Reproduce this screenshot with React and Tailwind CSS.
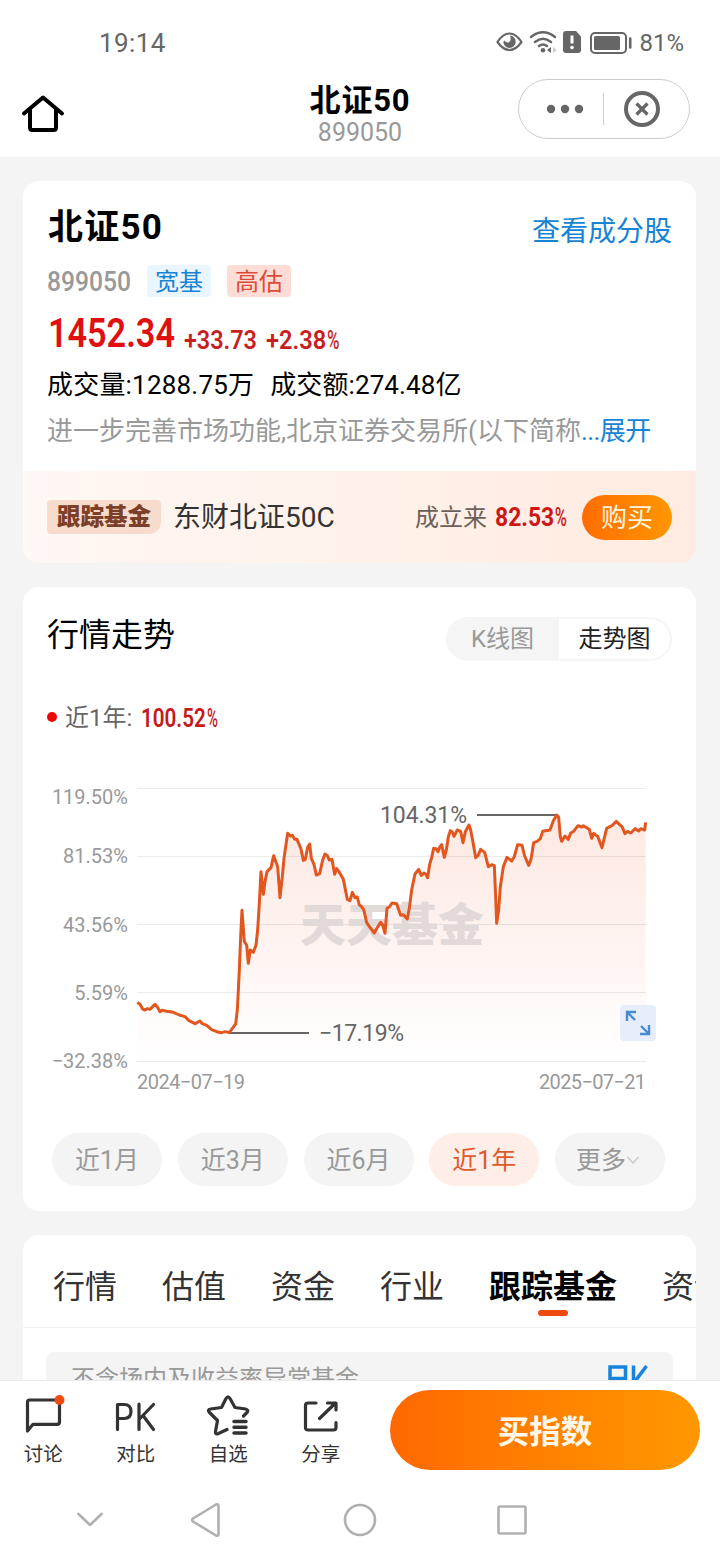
import React from "react";

const LINE =
  "292,697 300,703 308,717 315,720 322,716 330,718 338,710 345,703 352,711 360,725 366,721 380,724 400,727 418,735 435,740 447,752 465,761 480,753 487,761 500,766 515,779 530,785 545,788 556,785 568,788 575,778 587,762 592,720 598,600 602,500 606,421 613,515 620,525 625,580 631,540 640,547 648,525 653,480 658,400 663,305 670,373 675,335 681,305 693,293 701,257 713,290 720,383 727,320 732,265 743,190 751,198 757,196 764,208 771,208 783,237 790,271 796,268 803,232 809,222 814,265 822,283 829,315 839,311 848,270 855,252 862,257 868,270 876,268 884,313 890,296 897,305 910,328 922,388 930,392 937,367 945,383 952,381 958,405 963,408 971,418 980,458 990,472 1003,489 1011,474 1022,457 1028,465 1035,490 1041,415 1048,411 1056,399 1070,401 1082,436 1090,434 1102,447 1108,415 1115,360 1125,312 1136,298 1144,316 1152,309 1157,312 1163,323 1169,283 1175,263 1181,235 1188,236 1194,245 1200,230 1205,224 1213,262 1219,240 1225,200 1231,182 1237,186 1242,199 1252,180 1262,184 1269,218 1276,185 1287,165 1292,180 1300,222 1307,263 1314,257 1322,238 1334,247 1345,290 1355,284 1363,287 1367,380 1370,460 1376,420 1381,350 1390,290 1401,262 1415,273 1423,260 1433,224 1446,226 1454,258 1466,286 1473,268 1481,218 1490,215 1501,206 1508,184 1530,180 1540,152 1550,135 1556,142 1561,200 1565,214 1575,198 1585,208 1592,189 1600,185 1614,167 1625,171 1630,167 1648,178 1655,205 1661,190 1673,199 1686,233 1694,200 1700,175 1710,170 1718,165 1729,154 1738,163 1746,170 1755,191 1763,184 1772,189 1786,176 1796,183 1802,176 1814,180 1817,157";

function StatusBar() {
  return (
    <div className="flex h-[72px] items-center pt-[14px] text-[#666]">
      <span className="ml-[99px] text-[26px] leading-none tracking-[0.4px]">19:14</span>
      <svg className="ml-auto" width="136" height="30" viewBox="0 0 136 30" fill="none" stroke="#666">
        <path d="M1.5 14C5 8.5 9 5.500 13.500 5.500S22 8.500 25.500 14C22 19 18 22 13.500 22S5 19 1.500 14Z" strokeWidth="2.200" />
        <path d="M14 7.500A6.200 6.200 0 1 1 7.300 14Q8 13 8.500 12.500Q10 15 12.500 14.500Q16 12.500 14 7.500Z" fill="#666" stroke="none" />
        <g strokeWidth="2.400" strokeLinecap="round">
          <path d="M35 9Q47 -0.500 59 9M39 14Q47 7.500 55 14M43 18Q47 15 51 18" />
        </g>
        <circle cx="47" cy="22.300" r="2.300" fill="#666" stroke="none" />
        <path d="M51 22L55 19V25Z" fill="#666" stroke="none" />
        <path d="M57 19V25L61 22Z" fill="#ccc" stroke="none" />
        <path d="M70 3H80L85 8.500V22Q85 25 82 25H70Q67 25 67 22V6Q67 3 70 3Z" fill="#666" stroke="none" />
        <path d="M76 7.500V15.500" stroke="#fff" strokeWidth="3" />
        <circle cx="76" cy="19.500" r="1.800" fill="#fff" stroke="none" />
        <rect x="95" y="5" width="35" height="20" rx="4" strokeWidth="2" />
        <rect x="98" y="8" width="26" height="14" rx="1.500" fill="#666" stroke="none" />
        <path d="M134.200 10.500V19.500" strokeWidth="2.600" strokeLinecap="round" />
      </svg>
      <span className="ml-[7px] mr-[36px] text-[24px] leading-none">81%</span>
    </div>
  );
}

function Header() {
  return (
    <header className="grid h-[85px] grid-cols-3 items-start">
      <svg className="ml-[21px] mt-[21px]" width="44" height="40" viewBox="0 0 44 40" fill="none" stroke="#000" strokeWidth="4" strokeLinecap="round" strokeLinejoin="round">
        <path d="M3 20.500L22 4.500L41 20.500" />
        <path d="M9 17V34.500Q9 37 11.500 37H32.500Q35 37 35 34.500V17" />
      </svg>
      <div className="flex flex-col items-center">
        <h1 className="mt-[13px] text-[31px] font-bold leading-[32px] tracking-[0.8px]">北证50</h1>
        <p className="mt-[3px] text-[25px] leading-[26px] text-[#999]">899050</p>
      </div>
      <div className="mr-[30px] mt-[7px] flex h-[60px] w-[172px] items-center justify-self-end rounded-full border border-[#ccc]">
        <svg className="ml-[27px]" width="38" height="10" fill="#666">
          <circle cx="5" cy="5" r="4.200" /><circle cx="19" cy="5" r="4.200" /><circle cx="33" cy="5" r="4.200" />
        </svg>
        <span className="ml-[19px] h-8 w-px bg-[#ccc]" />
        <svg className="ml-[19px]" width="38" height="38" fill="none" stroke="#666">
          <circle cx="19" cy="19" r="16" strokeWidth="4" />
          <path d="M13.500 13.500L24.500 24.500M24.500 13.500L13.500 24.500" strokeWidth="3.200" />
        </svg>
      </div>
    </header>
  );
}

function Percent() {
  return <span className="ml-[1px] inline-block w-[13px] origin-left scale-x-[0.72] font-medium">%</span>;
}

function Summary() {
  return (
    <section className="h-[382px] shrink-0 overflow-hidden rounded-[16px] bg-white">
      <div className="h-[290px] pl-[25px] pr-[24px] pt-[24px]">
        <div className="flex h-[46px] items-center justify-between">
          <h2 className="mt-[-2px] text-[35px] font-bold leading-none tracking-[1.200px]">北证50</h2>
          <a className="mt-[7px] text-[28px] leading-none text-[#1783d3]">查看成分股</a>
        </div>
        <div className="mt-[14px] flex h-8 items-center">
          <span className="ml-[-1px] w-[100px] pt-[1px] text-[28px] font-medium leading-none text-[#999]"><span className="inline-block origin-left scale-x-[0.88]">899050</span></span>
          <span className="flex h-8 w-16 items-center justify-center rounded bg-[#eaf6ff] pt-[2px] text-[24px] leading-none text-[#1783d3]">宽基</span>
          <span className="ml-4 flex h-8 w-16 items-center justify-center rounded bg-[#ffdcd6] pt-[2px] text-[24px] leading-none text-[#da4c38]">高估</span>
        </div>
        <div className="mt-[12px] flex h-[48px] items-start font-semibold leading-[48px]">
          <span className="w-[136px] pt-[1px] text-[40px] text-[#e01010]"><span className="inline-block origin-left scale-x-[0.855]">1452.34</span></span>
          <span className="w-[82px] pt-[7px] text-[26px] text-[#c81e1e]"><span className="inline-block origin-left scale-x-[0.9]">+33.73</span></span>
          <span className="whitespace-nowrap pt-[7px] text-[26px] text-[#c81e1e]"><span className="inline-block origin-left scale-x-[0.91]">+2.38<Percent /></span></span>
        </div>
        <div className="ml-[-1px] mt-[9px] flex h-[36px] items-center gap-[16px] whitespace-nowrap pt-[1px] text-[26px] leading-none">
          <span className="tracking-[0.200px]">成交量:1288.75万</span>
          <span className="tracking-[0.100px]">成交额:274.48亿</span>
        </div>
        <p className="ml-[-1px] mt-[10px] flex h-[36px] items-center whitespace-nowrap pt-[2px] text-[26px] leading-none text-[#999]">
          进一步完善市场功能,北京证券交易所(以下简称<span className="tracking-[-0.600px] text-[#1783d3]">...展开</span>
        </p>
      </div>
      <div className="flex h-[92px] items-center bg-gradient-to-r from-[#fff8f4] via-[#fff1ea] to-[#ffebe1] pl-[24px] pr-[24px]">
        <span className="flex h-[34px] w-[114px] items-center justify-center rounded-[4px] rounded-br-[12px] bg-[#f7dccd] pt-[2px] text-[23.500px] font-black leading-none text-[#7c3f28]">跟踪基金</span>
        <span className="ml-[12px] pt-[2px] text-[28px] leading-none text-[#333]">东财北证50C</span>
        <span className="ml-auto pt-[2px] text-[24px] leading-none text-[#6b6059]">成立来</span>
        <span className="ml-[8px] w-[71px] whitespace-nowrap text-[26px] font-bold leading-none text-[#cd1717]"><span className="inline-block origin-left scale-x-[0.88]">82.53<Percent /></span></span>
        <button className="ml-[16px] h-[45px] w-[90px] rounded-full bg-gradient-to-r from-[#ff6c00] to-[#ff9600] pt-[2px] text-[26px] leading-none text-[#fff5df]">购买</button>
      </div>
    </section>
  );
}

function Chart() {
  const rows = [
    [18.5, "119.50%", 34],
    [86.5, "81.53%", 93],
    [154.5, "43.56%", 162],
    [222.5, "5.59%", 230],
    [291.5, "−32.38%", 298],
  ];
  return (
    <svg className="ml-[17px] block" width="640" height="330" viewBox="0 0 640 330">
      <defs>
        <linearGradient id="fade" x1="0" y1="45" x2="0" y2="290" gradientUnits="userSpaceOnUse">
          <stop offset="0" stopColor="#f0501e" stopOpacity="0.13" />
          <stop offset="0.500" stopColor="#f0501e" stopOpacity="0.070" />
          <stop offset="1" stopColor="#f0501e" stopOpacity="0" />
        </linearGradient>
        <clipPath id="area"><polygon points={`${LINE} 1817,873 292,873`} transform="scale(.33333)" /></clipPath>
      </defs>
      <rect x="97" y="40" width="510" height="251" fill="url(#fade)" clipPath="url(#area)" />
      {rows.map(([y, label, ty]) => (
        <g key={label}>
          <path d={`M97 ${y}H606`} stroke="#000" strokeOpacity="0.080" />
          <text x="88" y={ty} textAnchor="end" fontSize="20" fill="#999">{label}</text>
        </g>
      ))}
      <text x="260" y="171" fontSize="46" fontWeight="900" fill="#e2dad8">天天基金</text>
      <path d="M190 263H269M437 45H516" stroke="#666" strokeWidth="2" />
      <polyline points={LINE} transform="scale(.33333)" fill="none" stroke="#e2561f" strokeWidth="9" strokeLinejoin="round" />
      <g fontSize="23" fill="#666">
        <text x="340" y="53" textLength="87">104.31%</text>
        <text x="279" y="271" textLength="85">−17.19%</text>
      </g>
      <g fontSize="20" fill="#999">
        <text x="97" y="319" textLength="108">2024−07−19</text>
        <text x="499" y="319" textLength="107">2025−07−21</text>
      </g>
      <rect x="580" y="235" width="36" height="36" rx="4" fill="#e6eefb" />
      <path d="M587 251V242H596M588 243L595 250M609 255V264H600M608 263L601 256" fill="none" stroke="#4a8ad4" strokeWidth="2.400" />
    </svg>
  );
}

function Trend() {
  const base = "flex h-[53px] w-[110px] items-center justify-center rounded-full pt-[2px] text-[25px] leading-none ";
  return (
    <section className="mt-6 h-[624px] shrink-0 rounded-[16px] bg-white pt-[23px]">
      <div className="flex h-[57px] items-center justify-between pl-[24px] pr-[24px]">
        <h3 className="mt-[-8px] text-[32px] leading-none">行情走势</h3>
        <div className="flex h-[44px] w-[226px] overflow-hidden rounded-full border-2 border-[#f5f5f5] text-[24px] leading-none">
          <span className="flex w-[111px] items-center justify-center bg-[#f5f5f5] pr-[2px] text-[#999]">K线图</span>
          <span className="flex flex-1 items-center justify-center text-[#222]">走势图</span>
        </div>
      </div>
      <div className="mt-[30px] flex h-[40px] items-center pl-[24px]">
        <span className="h-[10px] w-[10px] rounded-full bg-[#f00606]" />
        <span className="ml-[8px] w-[76px] pt-[2px] text-[24px] leading-none text-[#666]">近1年:</span>
        <span className="whitespace-nowrap pt-[2px] text-[25px] font-semibold leading-none text-[#c41a1a]"><span className="inline-block origin-left scale-x-[0.825]">100.52<Percent /></span></span>
      </div>
      <div className="mt-[33px]"><Chart /></div>
      <div className="mt-[33px] flex justify-between pl-[29px] pr-[31px] text-[#999]">
        <span className={base + "bg-[#f4f4f4]"}>近1月</span>
        <span className={base + "bg-[#f4f4f4]"}>近3月</span>
        <span className={base + "bg-[#f4f4f4]"}>近6月</span>
        <span className={base + "bg-[#ffeee8] text-[#dd5b2a]"}>近1年</span>
        <span className={base + "bg-[#f4f4f4] pr-[4px]"}>
          更多
          <svg width="14" height="10" viewBox="0 0 14 10" fill="none" stroke="#ccc" strokeWidth="1.600"><path d="M1.500 1L7 7L12.500 1" /></svg>
        </span>
      </div>
    </section>
  );
}

function Tabs() {
  return (
    <section className="mt-6 h-[240px] shrink-0 overflow-hidden rounded-[16px] bg-white">
      <nav className="flex h-[93px] gap-[45px] whitespace-nowrap border-b border-[#f1f1f1] pl-[30px] pt-[35px] text-[32px] leading-[34px] text-[#333]">
        <span>行情</span><span>估值</span><span>资金</span><span>行业</span>
        <span className="flex flex-col items-center font-bold text-black">
          跟踪基金
          <i className="mt-[6px] h-[6px] w-[30px] rounded-full bg-[#ee4a10]" />
        </span>
        <span>资讯</span>
      </nav>
      <div className="ml-[23px] mr-[23px] mt-[24px] flex h-[56px] items-center justify-between rounded-t-[8px] bg-[#f4f4f4] pl-[25px] pr-[25px]">
        <span className="mt-[-2px] text-[24px] leading-none text-[#999]">不含场内及收益率异常基金</span>
        <svg className="mt-[-3px]" width="41" height="30" viewBox="0 0 41 30" fill="none" stroke="#1783dd" strokeWidth="3.500">
          <path d="M3 30V3H18.500V14.500H3M26.500 1.500V30M39.500 2L27.500 18L39.500 30" />
        </svg>
      </div>
    </section>
  );
}

function Item({ label, children }) {
  return (
    <div className="flex w-[92.5px] flex-col items-center">
      <svg width="48" height="46" viewBox="0 0 48 46" fill="none" stroke="#333" strokeWidth="3.200" strokeLinecap="round" strokeLinejoin="round">{children}</svg>
      <span className="mt-[8px] text-[19.5px] leading-[22px] text-[#333]">{label}</span>
    </div>
  );
}

function BottomBar() {
  return (
    <footer className="h-[180px] shrink-0 border-t border-[#ececec] bg-white">
      <div className="flex h-[99px] pt-[9px]">
        <div className="ml-[-3px] flex">
          <Item label="讨论">
            <path d="M8.500 41V12Q8.500 10 10.500 10H38Q40.500 10 40.500 12.500V32Q40.500 34.300 38 34.300H14Z" />
            <circle cx="40.500" cy="10" r="5" fill="#ee4a10" stroke="none" />
          </Item>
          <Item label="对比">
            <path d="M5.500 39.500V14.500H12Q19 14.500 19 21.500T12 28.500H5.500M27 14V39.500M41.500 14.500L27.500 29M31 25.500L41.500 39.500" />
          </Item>
          <Item label="自选">
            <path d="M23 39.500L14.500 43.500Q11 45 11.500 41.500L13.500 30.500L5.500 22.500Q3 19.500 6.500 19L17.500 17.500L22 8.500Q24 5 26 8.500L31 17.500L41.500 19Q45 20 43 22.500L39.500 26" />
            <path d="M30 31.500H42M30 37.200H42M30 43H42" strokeWidth="3.500" />
          </Item>
          <Item label="分享">
            <path d="M19 13H11Q8.500 13 8.500 15.500V37.500Q8.500 40 11 40H36.500Q39 40 39 37.500V32.500M22.500 28.500L38.500 13M30.500 13H39V20" />
          </Item>
        </div>
        <button className="ml-[23px] h-[80px] w-[310px] rounded-full bg-gradient-to-r from-[#ff6800] to-[#ff9800] pt-[5px] text-[31.500px] font-bold leading-none text-[#fff8e8]">买指数</button>
      </div>
      <div className="flex h-[80px] items-center">
        <svg className="ml-[75px]" width="456" height="36" viewBox="0 0 456 36" fill="none" stroke="#b0b0b0" strokeWidth="2.600" strokeLinecap="round" strokeLinejoin="round">
          <path d="M3.500 12L15 23L26.500 12" />
          <path d="M141 2.500L118 16.500Q116.500 18 118 19.500L141 33.500Q143.500 34.500 143.500 32V4Q143.500 1.500 141 2.500Z" />
          <circle cx="285" cy="18" r="15" />
          <rect x="423.500" y="4.500" width="27" height="27" rx="1.500" />
        </svg>
      </div>
    </footer>
  );
}

export default function App() {
  return (
    <div className="flex h-[1560px] w-[720px] flex-col overflow-hidden bg-[#f4f4f4] font-['Roboto','Noto_Sans_CJK_SC',sans-serif] text-black">
      <div className="shrink-0 bg-white">
        <StatusBar />
        <Header />
      </div>
      <main className="flex min-h-0 flex-1 flex-col overflow-hidden pl-[23px] pr-[24px] pt-6">
        <Summary />
        <Trend />
        <Tabs />
      </main>
      <BottomBar />
    </div>
  );
}
